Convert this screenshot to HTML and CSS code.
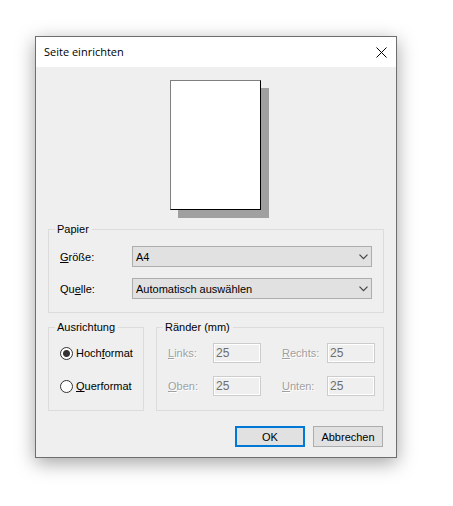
FILE: index.html
```html
<!DOCTYPE html>
<html lang="de">
<head>
  <meta charset="UTF-8">
  <title>Seite einrichten</title>
  <link rel="stylesheet" href="styles.css">
</head>
<body>
<form class="dialog">
  <header class="titlebar">
    <h1>Seite einrichten</h1>
    <button type="button" class="close" aria-label="Schließen">
      <svg width="11" height="11" viewBox="0 0 11 11"><path d="M0.5 0.5L10.5 10.5M10.5 0.5L0.5 10.5" stroke="#000" stroke-width="1" fill="none"/></svg>
    </button>
  </header>
  <div class="content">
    <div class="preview"><div class="sheet"></div></div>

    <fieldset class="paper">
      <legend>Papier</legend>
      <label for="size"><u>G</u>röße:</label>
      <div class="combo">
        <select id="size"><option>A4</option></select>
        <svg width="9" height="6" viewBox="0 0 9 6"><path d="M0.5 0.7L4.5 4.7L8.5 0.7" stroke="#444" stroke-width="1.2" fill="none"/></svg>
      </div>
      <label for="source">Qu<u>e</u>lle:</label>
      <div class="combo">
        <select id="source"><option>Automatisch auswählen</option></select>
        <svg width="9" height="6" viewBox="0 0 9 6"><path d="M0.5 0.7L4.5 4.7L8.5 0.7" stroke="#444" stroke-width="1.2" fill="none"/></svg>
      </div>
    </fieldset>

    <div class="groups">
      <fieldset class="orientation">
        <legend>Ausrichtung</legend>
        <label><input type="radio" name="orientation" checked><span>Hoch<u>f</u>ormat</span></label>
        <label><input type="radio" name="orientation"><span><u>Q</u>uerformat</span></label>
      </fieldset>
      <fieldset class="margins">
        <legend>Ränder (mm)</legend>
        <label for="left"><u>L</u>inks:</label>
        <input id="left" type="text" value="25" disabled>
        <label for="right" class="second"><u>R</u>echts:</label>
        <input id="right" type="text" value="25" disabled>
        <label for="top"><u>O</u>ben:</label>
        <input id="top" type="text" value="25" disabled>
        <label for="bottom" class="second"><u>U</u>nten:</label>
        <input id="bottom" type="text" value="25" disabled>
      </fieldset>
    </div>

    <div class="buttons">
      <button type="submit" class="default">OK</button>
      <button type="button">Abbrechen</button>
    </div>
  </div>
</form>
</body>
</html>
```

FILE: styles.css
```css
* {
  box-sizing: border-box;
}
body {
  margin: 0;
  padding: 36px 56px 48px 35px;
  background: #fff;
  color: #000;
  font: 11px/14px "Liberation Sans", Arial, sans-serif;
}
.dialog {
  border: 1px solid #6e6e6e;
  background: #efefef;
  box-shadow: 0 5px 18px rgba(0, 0, 0, 0.36);
}
.titlebar {
  display: flex;
  align-items: center;
  justify-content: space-between;
  height: 30px;
  padding: 0 9px 0 8px;
  background: #fff;
}
h1 {
  margin: 0;
  font: 11px/16px "Open Sans", "Noto Sans", sans-serif;
}
.close {
  display: flex;
  padding: 0;
  border: 0;
  background: none;
}
.content {
  padding: 13px 12px 10px;
}
.preview {
  display: flex;
  justify-content: center;
  margin-bottom: 12px;
  padding-right: 2px;
}
.sheet {
  width: 91px;
  height: 130px;
  border: 1px solid;
  border-color: #808080 #000 #000 #808080;
  background: #fff;
  box-shadow: 8px 8px 0 #a0a0a0;
}
fieldset {
  min-width: 0;
  margin: 0;
  border: 1px solid #dcdcdc;
}
legend {
  margin-left: -5px;
  padding: 0 3px 0 2px;
}
u {
  text-underline-offset: 1px;
  text-decoration-skip-ink: none;
}
.paper {
  display: grid;
  grid-template-columns: 72px 1fr;
  row-gap: 11px;
  align-items: center;
  padding: 10px 11px 13px;
}
.combo {
  display: flex;
  align-items: center;
}
.combo select {
  appearance: none;
  width: 100%;
  height: 21px;
  padding: 0 20px 0 3px;
  border: 1px solid #adadad;
  border-radius: 0;
  background: #e1e1e1;
  color: #000;
  font: inherit;
}
.combo svg {
  flex: none;
  margin-left: -13px;
  margin-right: 4px;
  pointer-events: none;
}
.groups {
  display: grid;
  grid-template-columns: 96px 1fr;
  gap: 12px;
  margin-top: 7px;
}
.orientation {
  padding: 9px 0 14px 11px;
}
.orientation label {
  display: flex;
  align-items: center;
  gap: 3px;
  height: 20px;
}
.orientation label + label {
  margin-top: 13px;
}
.orientation input {
  appearance: none;
  flex: none;
  width: 13px;
  height: 13px;
  margin: 0;
  border: 1px solid #333;
  border-radius: 50%;
  background: #fff;
}
.orientation input:checked {
  background: radial-gradient(circle, #333 3px, #fff 4px);
}
.margins {
  display: grid;
  grid-template-columns: 45px 1fr 66px 1fr;
  row-gap: 13px;
  align-items: center;
  padding: 9px 8px 14px 11px;
}
.margins label {
  color: #a0a0a0;
  text-shadow: 1px 1px 0 #fff;
}
.margins .second {
  padding-left: 21px;
}
.margins input {
  width: 100%;
  height: 20px;
  padding: 0 2px;
  border: 1px solid #ccc;
  background: #efefef;
  box-shadow: inset 0 0 0 1px #fff;
  color: #6d6d6d;
  font: inherit;
  font-size: 12px;
}
.buttons {
  display: flex;
  justify-content: flex-end;
  gap: 8px;
  margin-top: 15px;
  padding-right: 1px;
}
.buttons button {
  width: 70px;
  height: 21px;
  padding: 0;
  border: 1px solid #adadad;
  background: #e1e1e1;
  color: #000;
  font: inherit;
}
.buttons .default {
  border: 2px solid #0078d7;
}
```
